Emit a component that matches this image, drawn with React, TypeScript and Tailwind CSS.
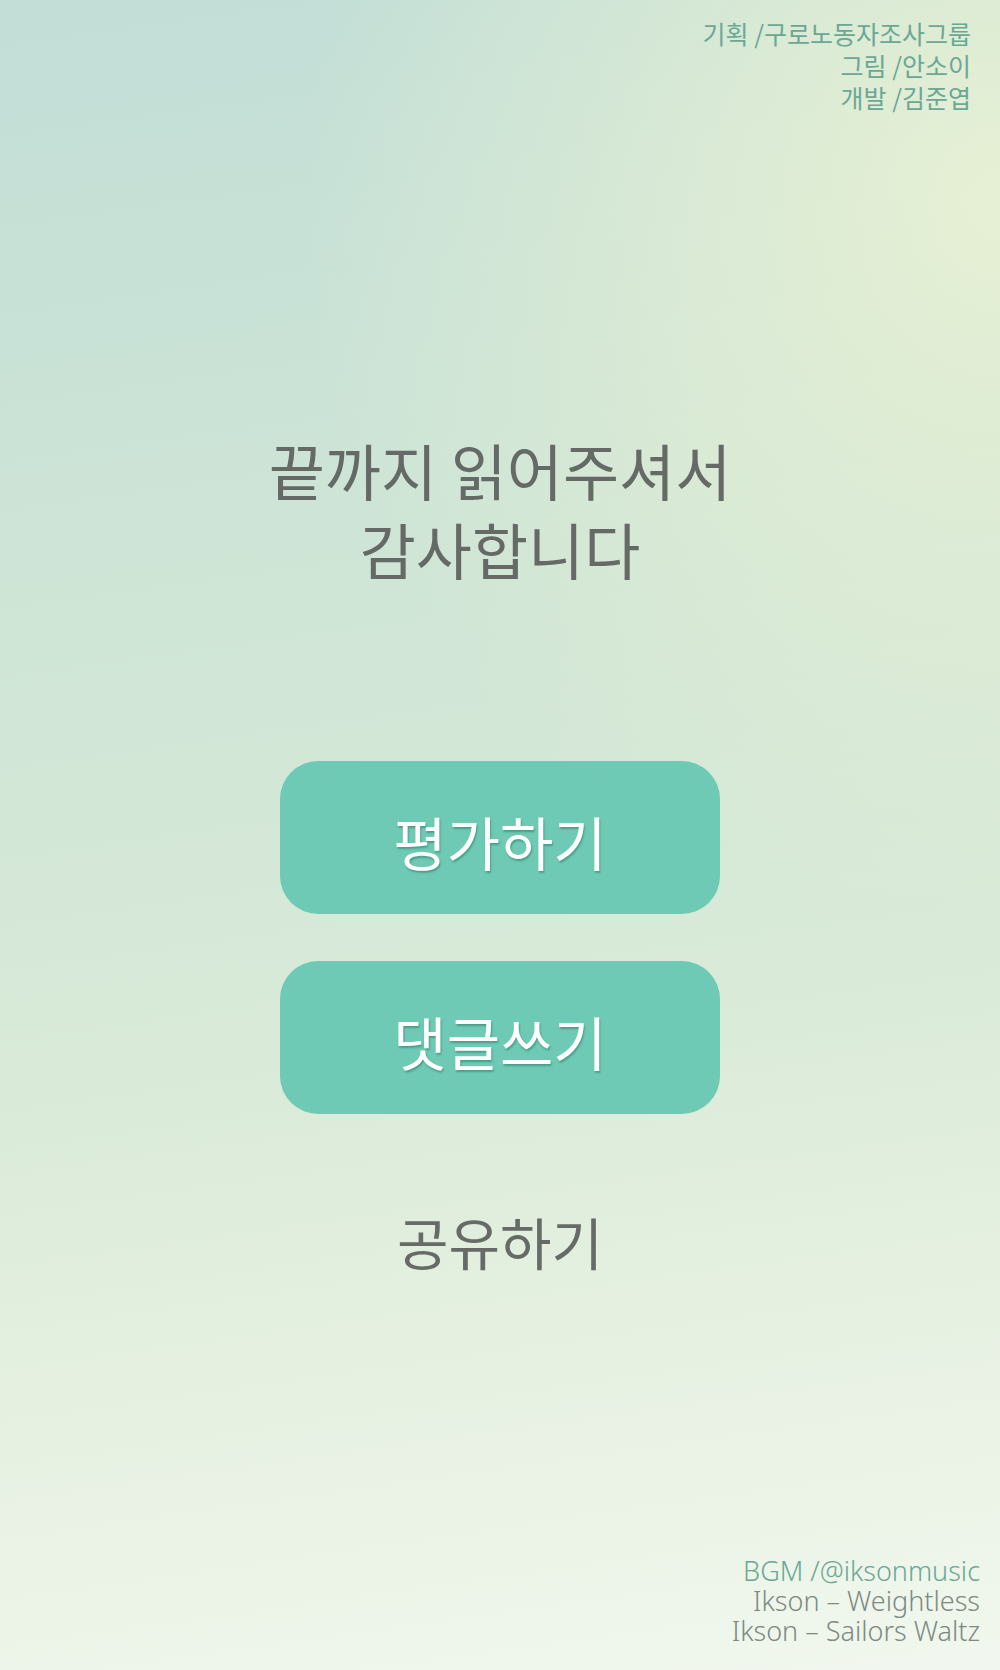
import React from 'react';

const credits = [
  { role: '기획', name: '구로노동자조사그룹' },
  { role: '그림', name: '안소이' },
  { role: '개발', name: '김준엽' },
];

const actions = ['평가하기', '댓글쓰기'];

export default function App() {
  return (
    <div
      className="flex h-[1670px] w-full flex-col overflow-hidden bg-[radial-gradient(ellipse_70%_45%_at_100%_12%,rgba(232,241,212,0.95)_0%,rgba(232,241,212,0)_100%),linear-gradient(172deg,#c2ded7_0%,#cfe5d6_35%,#d9ead8_60%,#e7f1e2_80%,#f1f7ee_100%)] font-['Noto_Sans_CJK_KR','Noto_Sans',sans-serif]"
    >
      <div className="flex flex-col items-end pr-[29px] pt-[17px] text-[25px] leading-[32px] text-[#6aa895]">
        {credits.map((c) => (
          <div key={c.role}>
            {c.role} /{c.name}
          </div>
        ))}
      </div>

      <h1 className="mt-[317px] text-center text-[61px] font-normal leading-[79px] text-[#656a66]">
        끝까지 읽어주셔서
        <br />
        감사합니다
      </h1>

      <div className="mt-[173px] flex flex-col items-center gap-[47px]">
        {actions.map((label) => (
          <button
            key={label}
            className="flex h-[153px] w-[440px] items-center justify-center rounded-[38px] bg-[#6ecab4] pt-[8px] text-[58px] text-white [text-shadow:1px_2px_2px_rgba(0,80,60,0.35)]"
          >
            {label}
          </button>
        ))}
      </div>

      <button className="mx-auto mt-[94px] text-[56px] leading-[66px] text-[#676b67]">공유하기</button>

      <div className="mt-auto flex flex-col items-end pb-[24px] pr-[20px] font-['Noto_Sans',sans-serif] text-[27px] font-light leading-[30px]">
        <div className="text-[#6aa895]">BGM /@iksonmusic</div>
        <div className="text-[#7d8a82]">Ikson – Weightless</div>
        <div className="text-[#7d8a82]">Ikson – Sailors Waltz</div>
      </div>
    </div>
  );
}
